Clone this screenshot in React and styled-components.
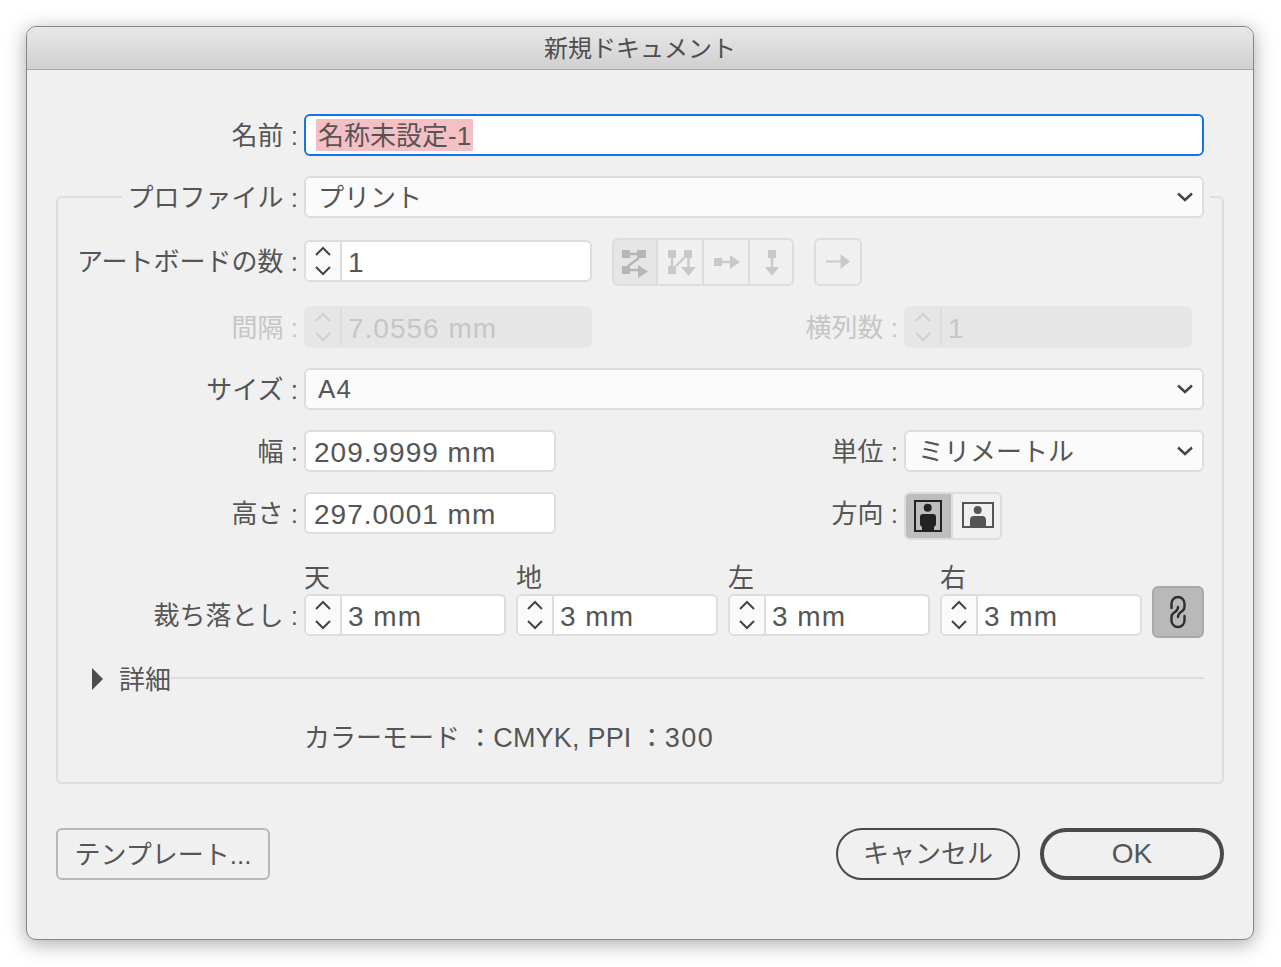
import React from "react";
import styled, { createGlobalStyle } from "styled-components";

const GlobalStyle = createGlobalStyle`
  html, body {
    margin: 0;
    padding: 0;
    background: #ffffff;
  }
  body {
    font-family: "Liberation Sans", "Noto Sans CJK JP", sans-serif;
    color: #555555;
  }
  * {
    box-sizing: border-box;
  }
`;

const Page = styled.div`
  width: 1281px;
  height: 967px;
  padding: 26px 27px 27px 26px;
  overflow: hidden;
`;

const Window = styled.div`
  width: 1228px;
  height: 914px;
  background: #f0f0f0;
  border: 1px solid #858585;
  border-radius: 10px;
  box-shadow: 0 4px 20px rgba(0, 0, 0, 0.34);
  overflow: hidden;
`;

const TitleBar = styled.div`
  height: 43px;
  padding-top: 2px;
  display: flex;
  align-items: center;
  justify-content: center;
  background: linear-gradient(#e8e8e8, #d0d0d0);
  border-bottom: 1px solid #a8a8a8;
  font-size: 24px;
  line-height: 36px;
  color: #4d4d4d;
`;

const Body = styled.div`
  padding: 44px 29px 0;
`;

const Row = styled.div`
  display: flex;
  align-items: flex-start;
`;

const BleedRow = styled(Row)`
  margin-top: 4px;
`;

const Label = styled.div`
  flex: none;
  height: 42px;
  line-height: 44px;
  width: ${(props) => props.width || "auto"};
  margin-left: ${(props) => (props.push ? "auto" : "0")};
  margin-right: 6px;
  text-align: right;
  white-space: pre;
  font-size: 26px;
  color: ${(props) => (props.disabled ? "#c6c6c6" : "#555555")};
`;

const NameField = styled.div`
  flex: none;
  width: 900px;
  height: 42px;
  padding: 2px 10px;
  display: flex;
  align-items: center;
  background: #ffffff;
  border: 2px solid #1473e6;
  border-radius: 6px;
  font-size: 26px;
`;

const Selected = styled.span`
  height: 32px;
  line-height: 34px;
  padding: 0 2px;
  background: #f5c0c5;
`;

const Group = styled.fieldset`
  margin: 20px 0 0;
  padding: 0 18px 30px 0;
  min-width: 0;
  height: 608px;
  border: 2px solid #dddddd;
  border-radius: 6px;
`;

const Legend = styled.legend`
  display: flex;
  width: 1088px;
  margin-left: 64px;
  padding: 0 6px 0 0;
`;

const Rows = styled.div`
  display: flex;
  flex-direction: column;
  gap: 20px;
  padding-top: 22px;
`;

const Select = styled.div`
  flex: none;
  width: ${(props) => props.width || "900px"};
  height: 42px;
  padding: 0 8px 0 12px;
  display: flex;
  align-items: center;
  justify-content: space-between;
  background: #fbfbfb;
  border: 2px solid #dddddd;
  border-radius: 6px;
  font-size: 26px;
  line-height: 38px;
  letter-spacing: ${(props) => (props.latin ? "1.2px" : "0")};
`;

const SelectText = styled.span`
  padding-top: 2px;
`;

const TextField = styled.div`
  flex: none;
  width: 252px;
  height: 42px;
  padding: 4px 8px 0;
  display: flex;
  align-items: center;
  background: #ffffff;
  border: 2px solid #dddddd;
  border-radius: 6px;
  font-size: 28px;
  letter-spacing: 1px;
`;

const Spinner = styled.div`
  flex: none;
  width: ${(props) => props.width || "202px"};
  height: 42px;
  display: flex;
  margin-right: ${(props) => props.endGap || "0"};
  background: ${(props) => (props.disabled ? "#e6e6e6" : "#ffffff")};
  border: 2px solid ${(props) => (props.disabled ? "#e6e6e6" : "#dddddd")};
  border-radius: 6px;
  overflow: hidden;
`;

const Stepper = styled.div`
  flex: none;
  width: 36px;
  display: flex;
  align-items: center;
  justify-content: center;
  background: ${(props) => (props.disabled ? "#e6e6e6" : "#fafafa")};
  border-right: 2px solid #dddddd;
`;

const SpinnerValue = styled.div`
  flex: 1;
  padding-left: 6px;
  line-height: 42px;
  font-size: 28px;
  letter-spacing: 1px;
  color: ${(props) => (props.disabled ? "#c6c6c6" : "#555555")};
`;

const Segments = styled.div`
  flex: none;
  display: flex;
  height: 48px;
  margin: -2px 0 0 20px;
  border: 2px solid #dddddd;
  border-radius: 6px;
  overflow: hidden;
`;

const SegmentCell = styled.div`
  width: ${(props) => props.width || "44px"};
  display: flex;
  background: ${(props) => props.bg || "transparent"};
  border-left: ${(props) => (props.divided ? "2px solid #dddddd" : "none")};
`;

const Orientation = styled(Segments)`
  margin: 0 202px 0 0;
`;

const BleedFields = styled.div`
  display: flex;
  gap: 10px;
`;

const BleedField = styled.div`
  display: flex;
  flex-direction: column;
`;

const Caption = styled.div`
  height: 30px;
  line-height: 28px;
  font-size: 26px;
`;

const BleedLabelSlot = styled.div`
  align-self: flex-end;
`;

const LinkButton = styled.div`
  flex: none;
  width: 52px;
  height: 52px;
  margin-bottom: -2px;
  align-self: flex-end;
  display: flex;
  align-items: center;
  justify-content: center;
  background: #b9b9b9;
  border: 2px solid #a9a9a9;
  border-radius: 6px;
`;

const DetailsRow = styled.div`
  display: flex;
  align-items: center;
  height: 30px;
  margin-top: 28px;
  padding-left: 34px;
`;

const DetailsText = styled.span`
  padding-top: 2px;
  font-size: 26px;
  line-height: 30px;
`;

const DetailsRule = styled.div`
  flex: 1;
  height: 2px;
  margin: -2px 0 0 0;
  background: #dddddd;
`;

const Summary = styled.div`
  height: 30px;
  line-height: 32px;
  margin-top: 28px;
  padding-left: 246px;
  font-size: 26px;
  white-space: pre;
`;

const SummaryValue = styled.span`
  font-size: 27px;
  letter-spacing: ${(props) => props.spacing || "0.2px"};
`;

const Footer = styled.div`
  display: flex;
  align-items: center;
  gap: 20px;
  margin-top: 44px;
`;

const PlainButton = styled.div`
  width: 214px;
  height: 52px;
  padding-top: 2px;
  margin-right: auto;
  display: flex;
  align-items: center;
  justify-content: center;
  border: 2px solid #b8b8b8;
  border-radius: 6px;
  font-size: 26px;
  line-height: 42px;
`;

const PillButton = styled.div`
  width: 184px;
  height: 52px;
  display: flex;
  align-items: center;
  justify-content: center;
  border: ${(props) => (props.primary ? "4px" : "2px")} solid #4a4a4a;
  border-radius: 26px;
  font-size: ${(props) => (props.primary ? "28px" : "26px")};
  line-height: 42px;
`;

const Spin = ({ color = "#444" }) => (
  <svg width="20" height="34" viewBox="0 0 20 34" fill="none" stroke={color} strokeWidth="2">
    <path d="M3 11 L10 4 L17 11" />
    <path d="M3 23 L10 30 L17 23" />
  </svg>
);

const Chevron = () => (
  <svg width="18" height="10" viewBox="0 0 18 10" fill="none" stroke="#444" strokeWidth="2.4">
    <path d="M2 1.5 L9 8 L16 1.5" />
  </svg>
);

const DistributeIcon = () => (
  <svg width="42" height="44" viewBox="0 0 42 44" fill="#b6b6b6" stroke="none">
    <rect x="8" y="10" width="8" height="8" />
    <rect x="23" y="10" width="9" height="8" />
    <rect x="8" y="26" width="8" height="8" />
    <path d="M24 25 L34 31.5 L24 38 Z" />
    <path d="M15 14 H24 M25 18 L14 26 M15 30 H26" stroke="#b6b6b6" strokeWidth="2.4" />
  </svg>
);

const ColumnIcon = () => (
  <svg width="44" height="44" viewBox="0 0 44 44" fill="#c9c9c9" stroke="none">
    <rect x="10" y="10" width="8" height="8" />
    <rect x="26" y="10" width="8" height="8" />
    <rect x="10" y="26" width="8" height="8" />
    <path d="M23 27 H38 L30.5 36 Z" />
    <path d="M14 17 V27 M18 26 L26 18 M30.5 17 V28" stroke="#c9c9c9" strokeWidth="2.4" />
  </svg>
);

const RowIcon = () => (
  <svg width="44" height="44" viewBox="0 0 44 44" fill="#c9c9c9" stroke="none">
    <rect x="10" y="18" width="8" height="8" />
    <path d="M26 15 L36 22 L26 29 Z" />
    <path d="M17 22 H27" stroke="#c9c9c9" strokeWidth="2.4" />
  </svg>
);

const DownIcon = () => (
  <svg width="42" height="44" viewBox="0 0 42 44" fill="#c9c9c9" stroke="none">
    <rect x="18" y="10" width="8" height="8" />
    <path d="M15 27 H29 L22 36 Z" />
    <path d="M22 17 V28" stroke="#c9c9c9" strokeWidth="2.4" />
  </svg>
);

const ArrowIcon = () => (
  <svg width="44" height="44" viewBox="0 0 44 44" fill="#c9c9c9" stroke="none">
    <path d="M24.5 14 L34 21.5 L24.5 29 Z" />
    <path d="M10 21.5 H26" stroke="#c9c9c9" strokeWidth="2" />
  </svg>
);

const PortraitIcon = () => (
  <svg width="45" height="44" viewBox="0 0 45 44">
    <rect x="9" y="7" width="26" height="30" fill="none" stroke="#222" strokeWidth="2" />
    <circle cx="21.7" cy="13.7" r="4" fill="#222" />
    <path d="M16 38 V33 Q14 32 14 30 V23 Q14 20 17 20 H27 Q30 20 30 23 V30 Q30 32 28 33 V38 Z" fill="#222" />
  </svg>
);

const LandscapeIcon = () => (
  <svg width="47" height="44" viewBox="0 0 47 44">
    <rect x="10" y="9" width="30" height="24" fill="none" stroke="#555" strokeWidth="2" />
    <circle cx="24.7" cy="16" r="4" fill="#555" />
    <path d="M17 33 V26 Q17 22 21 22 H29 Q33 22 33 26 V33 Z" fill="#555" />
  </svg>
);

const ChainIcon = () => (
  <svg width="18" height="34" viewBox="0 0 18 34" fill="none" stroke="#2e2e2e" strokeWidth="2.4" strokeLinecap="round">
    <path d="M2.5 13 V8.5 A6.5 6.5 0 0 1 15.5 8.5 V12 Q15.5 15 12 17 Q9 19 9 22" />
    <path d="M15.5 21 V25.5 A6.5 6.5 0 0 1 2.5 25.5 V22 Q2.5 19 6 17 Q9 15 9 12" />
  </svg>
);

const TriangleIcon = () => (
  <svg width="27" height="24" viewBox="0 0 27 24" fill="#4d4d4d">
    <path d="M0 1 L11 12 L0 23 Z" />
  </svg>
);

const NumberField = ({ value, width, disabled, endGap }) => (
  <Spinner width={width} disabled={disabled} endGap={endGap}>
    <Stepper disabled={disabled}>
      <Spin color={disabled ? "#cfcfcf" : "#444"} />
    </Stepper>
    <SpinnerValue disabled={disabled}>{value}</SpinnerValue>
  </Spinner>
);

const bleeds = ["天", "地", "左", "右"];

export default function App() {
  return (
    <>
      <GlobalStyle />
      <Page>
        <Window>
          <TitleBar>新規ドキュメント</TitleBar>
          <Body>
            <Row>
              <Label width="242px">名前 :</Label>
              <NameField>
                <Selected>名称未設定-1</Selected>
              </NameField>
            </Row>

            <Group>
              <Legend>
                <Label width="176px">プロファイル :</Label>
                <Select>
                  <SelectText>プリント</SelectText>
                  <Chevron />
                </Select>
              </Legend>

              <Rows>
                <Row>
                  <Label width="240px">アートボードの数 :</Label>
                  <NumberField value="1" width="288px" />
                  <Segments>
                    <SegmentCell width="42px" bg="#e6e6e6">
                      <DistributeIcon />
                    </SegmentCell>
                    <SegmentCell width="46px" divided>
                      <ColumnIcon />
                    </SegmentCell>
                    <SegmentCell width="46px" divided>
                      <RowIcon />
                    </SegmentCell>
                    <SegmentCell width="44px" divided>
                      <DownIcon />
                    </SegmentCell>
                  </Segments>
                  <Segments>
                    <SegmentCell>
                      <ArrowIcon />
                    </SegmentCell>
                  </Segments>
                </Row>

                <Row>
                  <Label width="240px" disabled>
                    間隔 :
                  </Label>
                  <NumberField value="7.0556 mm" width="288px" disabled />
                  <Label push disabled>
                    横列数 :
                  </Label>
                  <NumberField value="1" width="288px" disabled endGap="12px" />
                </Row>

                <Row>
                  <Label width="240px">サイズ :</Label>
                  <Select latin>
                    <span>A4</span>
                    <Chevron />
                  </Select>
                </Row>

                <Row>
                  <Label width="240px">幅 :</Label>
                  <TextField>209.9999 mm</TextField>
                  <Label push>単位 :</Label>
                  <Select width="300px">
                    <SelectText>ミリメートル</SelectText>
                    <Chevron />
                  </Select>
                </Row>

                <Row>
                  <Label width="240px">高さ :</Label>
                  <TextField>297.0001 mm</TextField>
                  <Label push>方向 :</Label>
                  <Orientation>
                    <SegmentCell width="45px" bg="#bdbdbd">
                      <PortraitIcon />
                    </SegmentCell>
                    <SegmentCell width="49px" divided>
                      <LandscapeIcon />
                    </SegmentCell>
                  </Orientation>
                </Row>

                <BleedRow>
                  <BleedLabelSlot>
                    <Label width="240px">裁ち落とし :</Label>
                  </BleedLabelSlot>
                  <BleedFields>
                    {bleeds.map((side) => (
                      <BleedField key={side}>
                        <Caption>{side}</Caption>
                        <NumberField value="3 mm" />
                      </BleedField>
                    ))}
                    <LinkButton>
                      <ChainIcon />
                    </LinkButton>
                  </BleedFields>
                </BleedRow>
              </Rows>

              <DetailsRow>
                <TriangleIcon />
                <DetailsText>詳細</DetailsText>
                <DetailsRule />
              </DetailsRow>
              <Summary>
                カラーモード ：<SummaryValue>CMYK, PPI</SummaryValue> ：<SummaryValue spacing="1.5px">300</SummaryValue>
              </Summary>
            </Group>

            <Footer>
              <PlainButton>テンプレート...</PlainButton>
              <PillButton>キャンセル</PillButton>
              <PillButton primary>OK</PillButton>
            </Footer>
          </Body>
        </Window>
      </Page>
    </>
  );
}
